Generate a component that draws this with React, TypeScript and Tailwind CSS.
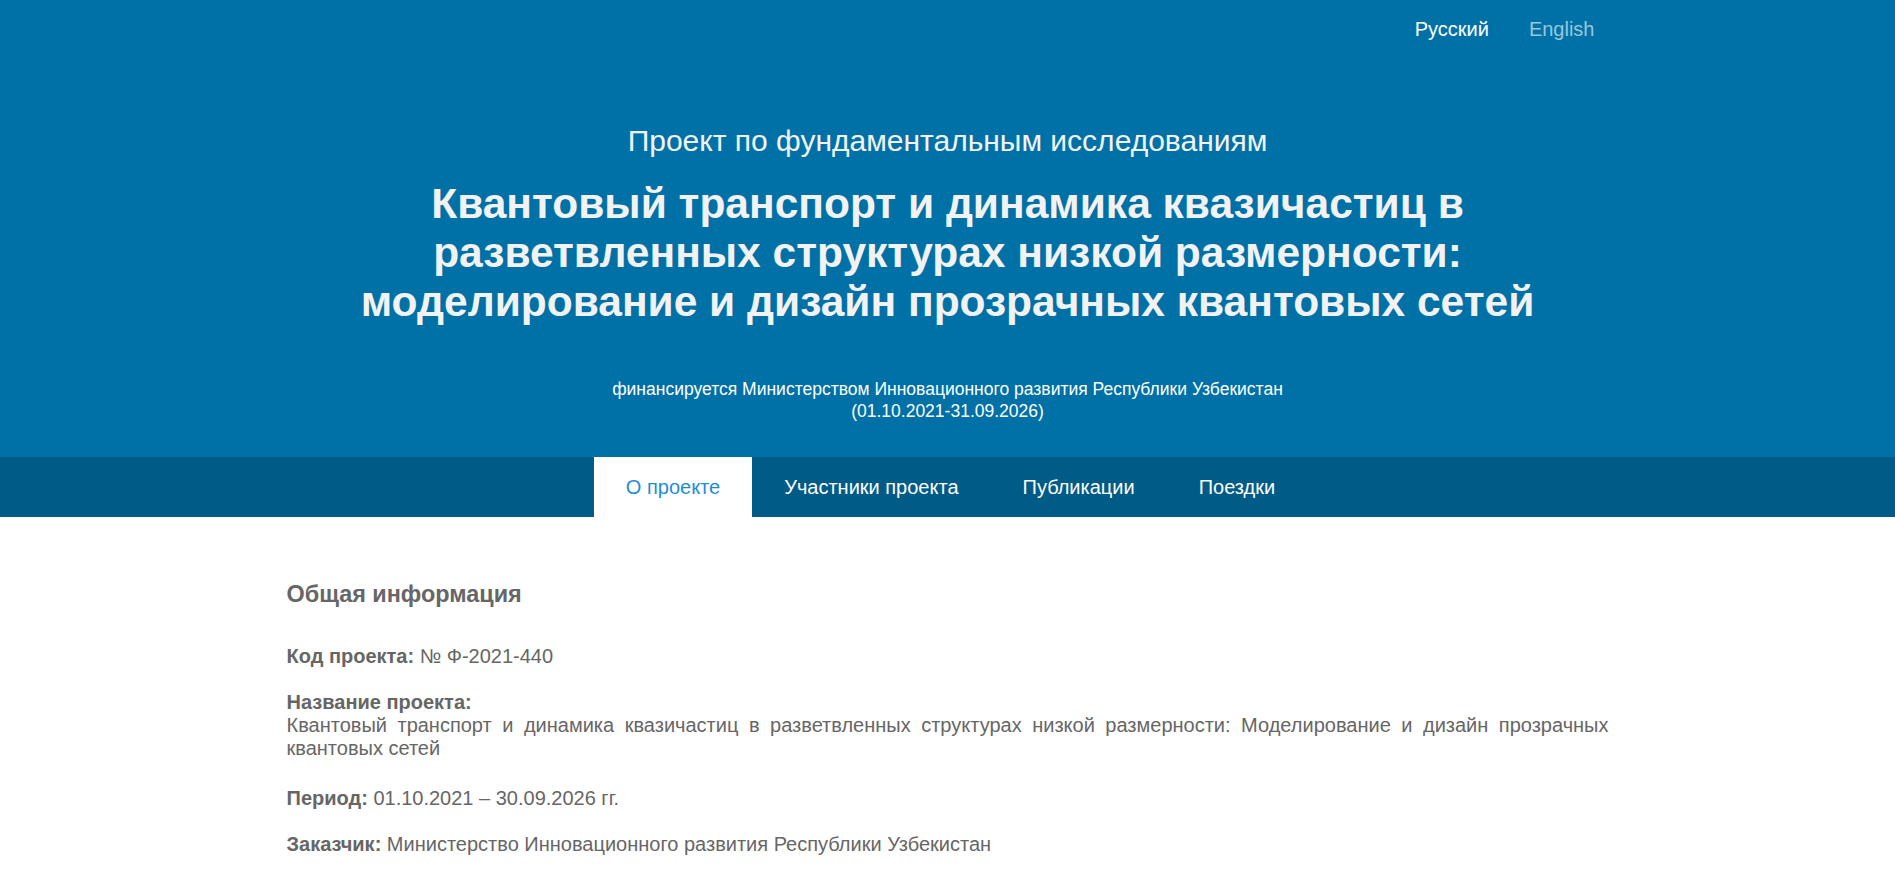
import React from "react";

export default function App() {
  const tabs = ["О проекте", "Участники проекта", "Публикации", "Поездки"];
  return (
    <div className="min-h-screen bg-white font-['Liberation_Sans',Arial,sans-serif]">
      <header className="bg-[#0071a7]">
        <div className="mx-auto w-[1322px] pt-[18px]">
          <div className="mr-[-6px] flex justify-end text-[20px] leading-[23px]">
            <a className="px-5 text-white">Русский</a>
            <a className="px-5 text-[#99c6db]">English</a>
          </div>
        </div>
        <div className="mt-[82px] text-center">
          <div className="text-[30px] leading-[36px] text-[#f3f3f3]">
            Проект по фундаментальным исследованиям
          </div>
          <h1 className="mt-[20px] text-[42.5px] font-bold leading-[49px] text-[#f2f2f2]">
            Квантовый транспорт и динамика квазичастиц в<br />
            разветвленных структурах низкой размерности:<br />
            моделирование и дизайн прозрачных квантовых сетей
          </h1>
          <div className="mt-[52px] pb-[35px] text-[17.5px] leading-[22px] text-white">
            финансируется Министерством Инновационного развития Республики Узбекистан
            <br />
            (01.10.2021-31.09.2026)
          </div>
        </div>
        <nav className="flex h-[60px] justify-center bg-[#005b87] pl-[6px]">
          {tabs.map((t, i) => (
            <a
              key={t}
              className={
                i === 0
                  ? "flex items-center bg-white px-8 text-[20px] text-[#1f8dd6]"
                  : "flex items-center px-8 text-[20px] text-white"
              }
            >
              {t}
            </a>
          ))}
        </nav>
      </header>
      <main className="mx-auto w-[1322px] pt-[64px] text-[20px] leading-[23px] text-[#666]">
        <h2 className="text-[23.4px] font-bold leading-[26px] text-[#666]">Общая информация</h2>
        <div className="mt-[38px] flex flex-col gap-[23px]">
          <p>
            <b>Код проекта:</b> № Ф-2021-440
          </p>
          <p className="mb-[4px] text-justify">
            <b>Название проекта:</b>
            <br />
            Квантовый транспорт и динамика квазичастиц в разветвленных структурах низкой размерности: Моделирование и дизайн прозрачных квантовых сетей
          </p>
          <p>
            <b>Период:</b> 01.10.2021 – 30.09.2026 гг.
          </p>
          <p>
            <b>Заказчик:</b> Министерство Инновационного развития Республики Узбекистан
          </p>
          <p className="mt-[8px]">
            <b>Исполнитель:</b> Туринский политехнический университет в городе Ташкенте
          </p>
        </div>
      </main>
    </div>
  );
}
